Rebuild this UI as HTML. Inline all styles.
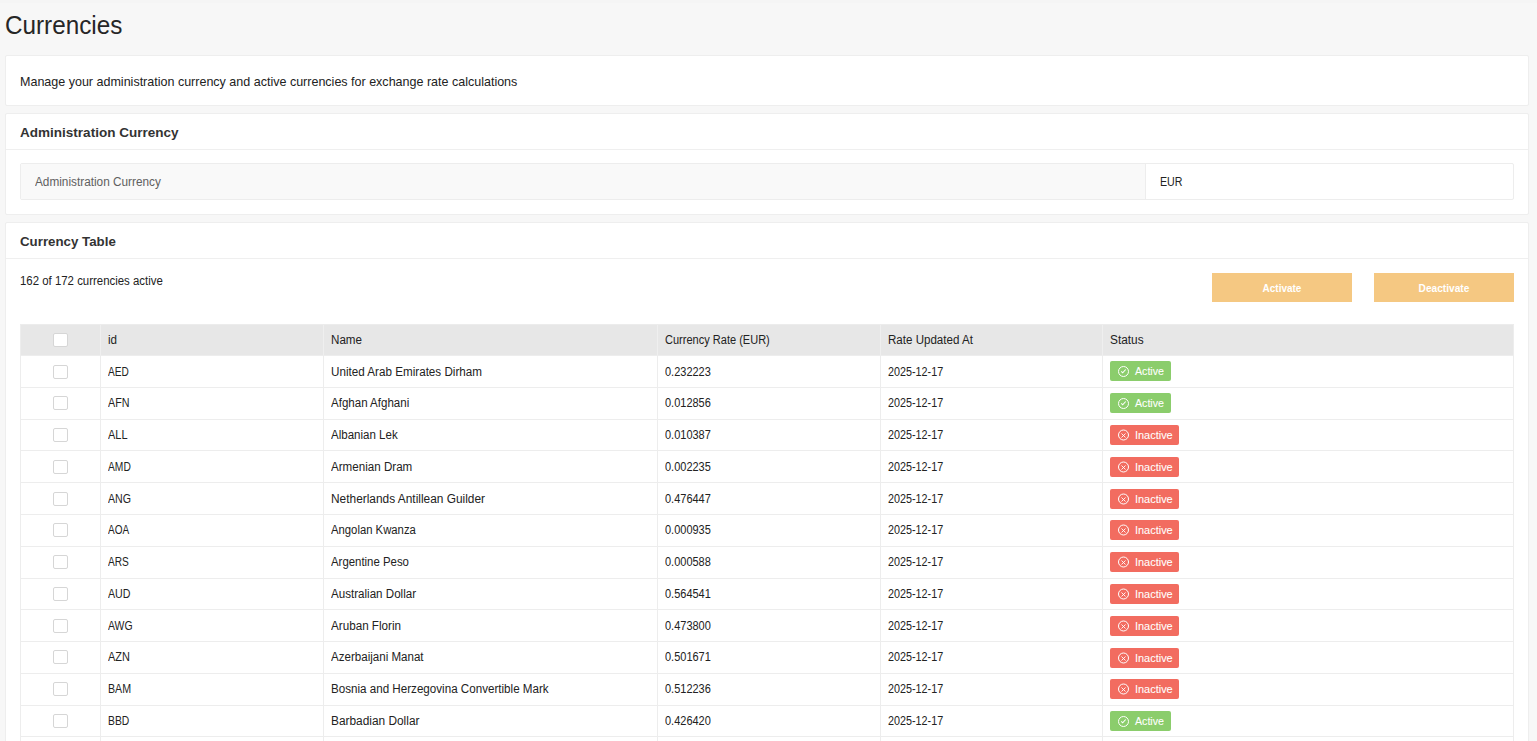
<!DOCTYPE html>
<html><head><meta charset="utf-8"><title>Currencies</title>
<style>
html,body{margin:0;padding:0}
body{background:#f7f7f7;font-family:"Liberation Sans",sans-serif;color:#222;width:1537px;height:741px;overflow:hidden;position:relative}
.t{position:absolute;white-space:nowrap;line-height:20px;font-size:12.5px}
.title{font-size:25px;color:#262626}
.desc{font-size:13px;color:#222}
.hdr{font-size:13.5px;font-weight:700;color:#333}
.lbl{color:#606060}
.cell{color:#222}
.btnt{font-size:11px;font-weight:700;color:#fff}
.bt{font-size:11px;color:#fff;-webkit-text-stroke:0.08px #fff}
.panel{position:absolute;left:5px;width:1522px;background:#fff;border:1px solid #eeeeee;border-radius:2px}
.topstrip{position:absolute;left:0;top:0;width:1537px;height:3px;background:#f5f5f5}
.hl{position:absolute;height:1px;background:#efefef}
.tl{left:20px;width:1494px;background:#ededed}
.vl{position:absolute;width:1px;background:#ededed}
.hv{background:#efefef}
.kv{position:absolute;left:20px;top:163px;width:1492px;height:35px;border:1px solid #ededed;background:#fff;border-radius:2px;overflow:hidden}
.kvk{position:absolute;left:0;top:0;width:1124px;height:35px;background:#f9f9f9;border-right:1px solid #ededed}
.btn{position:absolute;top:273px;width:140px;height:29px;background:#f5c882}
.thbg{position:absolute;left:20px;top:324px;width:1494px;height:31px;background:#e7e7e7}
.cb{position:absolute;left:53px;width:15px;height:14px;box-sizing:border-box;border:1px solid #d6d6d6;border-radius:2px;background:#fff}
.badge{position:absolute;left:1110px;height:20px;border-radius:2px}
.badge svg{position:absolute;left:7px;top:4px}
.green{background:#8bcd6c}
.red{background:#f26c60}
</style></head><body>
<div class="topstrip"></div>
<div class="t title" style="left:4.6px;top:15px;transform:scaleX(0.9706);transform-origin:0 50%">Currencies</div>
<div class="panel" style="top:55px;height:49px"></div>
<div class="panel" style="top:113px;height:100px"></div>
<div class="panel" style="top:222px;height:530px"></div>
<div class="hl" style="top:149px;left:6px;width:1522px"></div>
<div class="hl" style="top:258px;left:6px;width:1522px"></div>
<div class="t desc" style="left:20px;top:72px;transform:scaleX(0.9626);transform-origin:0 50%">Manage your administration currency and active currencies for exchange rate calculations</div>
<div class="t hdr" style="left:20px;top:123px;transform:scaleX(1.0019);transform-origin:0 50%">Administration Currency</div>
<div class="kv"><div class="kvk"></div></div>
<div class="t lbl" style="left:35px;top:172px;transform:scaleX(0.9433);transform-origin:0 50%">Administration Currency</div>
<div class="t cell" style="left:1160px;top:172px;transform:scaleX(0.8520);transform-origin:0 50%">EUR</div>
<div class="t hdr" style="left:20px;top:232px;transform:scaleX(0.9845);transform-origin:0 50%">Currency Table</div>
<div class="t cell" style="left:20px;top:271px;transform:scaleX(0.9135);transform-origin:0 50%">162 of 172 currencies active</div>
<div class="btn" style="left:1212px"></div><div class="btn" style="left:1374px"></div>
<div class="t btnt" style="width:140px;text-align:center;left:1212px;top:278px;transform:scaleX(0.9070);transform-origin:50% 50%">Activate</div>
<div class="t btnt" style="width:140px;text-align:center;left:1374px;top:278px;transform:scaleX(0.9218);transform-origin:50% 50%">Deactivate</div>
<div class="thbg"></div>
<div class="vl hv" style="left:100px;top:324px;height:31px"></div>
<div class="vl hv" style="left:323px;top:324px;height:31px"></div>
<div class="vl hv" style="left:657px;top:324px;height:31px"></div>
<div class="vl hv" style="left:880px;top:324px;height:31px"></div>
<div class="vl hv" style="left:1102px;top:324px;height:31px"></div>
<div class="vl" style="left:20px;top:324px;height:31px"></div>
<div class="vl" style="left:1513px;top:324px;height:31px"></div>
<div class="hl tl" style="top:324px;background:#ececec"></div>
<div class="hl tl" style="top:355px"></div>
<div class="hl tl" style="top:387px"></div>
<div class="hl tl" style="top:419px"></div>
<div class="hl tl" style="top:450px"></div>
<div class="hl tl" style="top:482px"></div>
<div class="hl tl" style="top:514px"></div>
<div class="hl tl" style="top:546px"></div>
<div class="hl tl" style="top:578px"></div>
<div class="hl tl" style="top:609px"></div>
<div class="hl tl" style="top:641px"></div>
<div class="hl tl" style="top:673px"></div>
<div class="hl tl" style="top:705px"></div>
<div class="hl tl" style="top:736px"></div>
<div class="vl" style="left:20px;top:355px;height:386px"></div>
<div class="vl" style="left:100px;top:355px;height:386px"></div>
<div class="vl" style="left:323px;top:355px;height:386px"></div>
<div class="vl" style="left:657px;top:355px;height:386px"></div>
<div class="vl" style="left:880px;top:355px;height:386px"></div>
<div class="vl" style="left:1102px;top:355px;height:386px"></div>
<div class="vl" style="left:1513px;top:355px;height:386px"></div>
<div class="cb" style="top:333px"></div>
<div class="t cell" style="left:108px;top:330px;transform:scaleX(0.9283);transform-origin:0 50%">id</div>
<div class="t cell" style="left:331px;top:330px;transform:scaleX(0.9283);transform-origin:0 50%">Name</div>
<div class="t cell" style="left:665px;top:330px;transform:scaleX(0.8822);transform-origin:0 50%">Currency Rate (EUR)</div>
<div class="t cell" style="left:888px;top:330px;transform:scaleX(0.9253);transform-origin:0 50%">Rate Updated At</div>
<div class="t cell" style="left:1110px;top:330px;transform:scaleX(0.9471);transform-origin:0 50%">Status</div>
<div class="cb" style="top:365px"></div>
<div class="t cell" style="left:108px;top:362px;transform:scaleX(0.8077);transform-origin:0 50%">AED</div>
<div class="t cell" style="left:331px;top:362px;transform:scaleX(0.9329);transform-origin:0 50%">United Arab Emirates Dirham</div>
<div class="t cell" style="left:665px;top:362px;transform:scaleX(0.8788);transform-origin:0 50%">0.232223</div>
<div class="t cell" style="left:888px;top:362px;transform:scaleX(0.8625);transform-origin:0 50%">2025-12-17</div>
<div class="badge green" style="top:361px;width:61px"><svg width="13" height="13" viewBox="0 0 13 13"><circle cx="6.5" cy="6.5" r="5" fill="none" stroke="#fff" stroke-width="1"/><path d="M4.3 6.4 L5.7 7.8 L8.7 4.5" fill="none" stroke="#fff" stroke-width="1.1"/></svg></div>
<div class="t bt" style="left:1135px;top:361px;transform:scaleX(0.9667);transform-origin:0 50%">Active</div>
<div class="cb" style="top:396px"></div>
<div class="t cell" style="left:108px;top:393px;transform:scaleX(0.8583);transform-origin:0 50%">AFN</div>
<div class="t cell" style="left:331px;top:393px;transform:scaleX(0.9226);transform-origin:0 50%">Afghan Afghani</div>
<div class="t cell" style="left:665px;top:393px;transform:scaleX(0.8788);transform-origin:0 50%">0.012856</div>
<div class="t cell" style="left:888px;top:393px;transform:scaleX(0.8625);transform-origin:0 50%">2025-12-17</div>
<div class="badge green" style="top:393px;width:61px"><svg width="13" height="13" viewBox="0 0 13 13"><circle cx="6.5" cy="6.5" r="5" fill="none" stroke="#fff" stroke-width="1"/><path d="M4.3 6.4 L5.7 7.8 L8.7 4.5" fill="none" stroke="#fff" stroke-width="1.1"/></svg></div>
<div class="t bt" style="left:1135px;top:393px;transform:scaleX(0.9667);transform-origin:0 50%">Active</div>
<div class="cb" style="top:428px"></div>
<div class="t cell" style="left:108px;top:425px;transform:scaleX(0.8773);transform-origin:0 50%">ALL</div>
<div class="t cell" style="left:331px;top:425px;transform:scaleX(0.9222);transform-origin:0 50%">Albanian Lek</div>
<div class="t cell" style="left:665px;top:425px;transform:scaleX(0.8788);transform-origin:0 50%">0.010387</div>
<div class="t cell" style="left:888px;top:425px;transform:scaleX(0.8625);transform-origin:0 50%">2025-12-17</div>
<div class="badge red" style="top:425px;width:69px"><svg width="13" height="13" viewBox="0 0 13 13"><circle cx="6.5" cy="6.0" r="5" fill="none" stroke="#fff" stroke-width="1"/><path d="M4.5 4.5 L8.5 8.5 M8.5 4.5 L4.5 8.5" fill="none" stroke="#fff" stroke-width="0.9"/></svg></div>
<div class="t bt" style="left:1135px;top:425px;transform:scaleX(0.9946);transform-origin:0 50%">Inactive</div>
<div class="cb" style="top:460px"></div>
<div class="t cell" style="left:108px;top:457px;transform:scaleX(0.8214);transform-origin:0 50%">AMD</div>
<div class="t cell" style="left:331px;top:457px;transform:scaleX(0.9287);transform-origin:0 50%">Armenian Dram</div>
<div class="t cell" style="left:665px;top:457px;transform:scaleX(0.8788);transform-origin:0 50%">0.002235</div>
<div class="t cell" style="left:888px;top:457px;transform:scaleX(0.8625);transform-origin:0 50%">2025-12-17</div>
<div class="badge red" style="top:457px;width:69px"><svg width="13" height="13" viewBox="0 0 13 13"><circle cx="6.5" cy="6.0" r="5" fill="none" stroke="#fff" stroke-width="1"/><path d="M4.5 4.5 L8.5 8.5 M8.5 4.5 L4.5 8.5" fill="none" stroke="#fff" stroke-width="0.9"/></svg></div>
<div class="t bt" style="left:1135px;top:457px;transform:scaleX(0.9946);transform-origin:0 50%">Inactive</div>
<div class="cb" style="top:492px"></div>
<div class="t cell" style="left:108px;top:489px;transform:scaleX(0.8500);transform-origin:0 50%">ANG</div>
<div class="t cell" style="left:331px;top:489px;transform:scaleX(0.9516);transform-origin:0 50%">Netherlands Antillean Guilder</div>
<div class="t cell" style="left:665px;top:489px;transform:scaleX(0.8788);transform-origin:0 50%">0.476447</div>
<div class="t cell" style="left:888px;top:489px;transform:scaleX(0.8625);transform-origin:0 50%">2025-12-17</div>
<div class="badge red" style="top:489px;width:69px"><svg width="13" height="13" viewBox="0 0 13 13"><circle cx="6.5" cy="6.0" r="5" fill="none" stroke="#fff" stroke-width="1"/><path d="M4.5 4.5 L8.5 8.5 M8.5 4.5 L4.5 8.5" fill="none" stroke="#fff" stroke-width="0.9"/></svg></div>
<div class="t bt" style="left:1135px;top:489px;transform:scaleX(0.9946);transform-origin:0 50%">Inactive</div>
<div class="cb" style="top:523px"></div>
<div class="t cell" style="left:108px;top:520px;transform:scaleX(0.8000);transform-origin:0 50%">AOA</div>
<div class="t cell" style="left:331px;top:520px;transform:scaleX(0.9043);transform-origin:0 50%">Angolan Kwanza</div>
<div class="t cell" style="left:665px;top:520px;transform:scaleX(0.8788);transform-origin:0 50%">0.000935</div>
<div class="t cell" style="left:888px;top:520px;transform:scaleX(0.8625);transform-origin:0 50%">2025-12-17</div>
<div class="badge red" style="top:520px;width:69px"><svg width="13" height="13" viewBox="0 0 13 13"><circle cx="6.5" cy="6.0" r="5" fill="none" stroke="#fff" stroke-width="1"/><path d="M4.5 4.5 L8.5 8.5 M8.5 4.5 L4.5 8.5" fill="none" stroke="#fff" stroke-width="0.9"/></svg></div>
<div class="t bt" style="left:1135px;top:520px;transform:scaleX(0.9946);transform-origin:0 50%">Inactive</div>
<div class="cb" style="top:555px"></div>
<div class="t cell" style="left:108px;top:552px;transform:scaleX(0.8120);transform-origin:0 50%">ARS</div>
<div class="t cell" style="left:331px;top:552px;transform:scaleX(0.9118);transform-origin:0 50%">Argentine Peso</div>
<div class="t cell" style="left:665px;top:552px;transform:scaleX(0.8788);transform-origin:0 50%">0.000588</div>
<div class="t cell" style="left:888px;top:552px;transform:scaleX(0.8625);transform-origin:0 50%">2025-12-17</div>
<div class="badge red" style="top:552px;width:69px"><svg width="13" height="13" viewBox="0 0 13 13"><circle cx="6.5" cy="6.0" r="5" fill="none" stroke="#fff" stroke-width="1"/><path d="M4.5 4.5 L8.5 8.5 M8.5 4.5 L4.5 8.5" fill="none" stroke="#fff" stroke-width="0.9"/></svg></div>
<div class="t bt" style="left:1135px;top:552px;transform:scaleX(0.9946);transform-origin:0 50%">Inactive</div>
<div class="cb" style="top:587px"></div>
<div class="t cell" style="left:108px;top:584px;transform:scaleX(0.8538);transform-origin:0 50%">AUD</div>
<div class="t cell" style="left:331px;top:584px;transform:scaleX(0.9272);transform-origin:0 50%">Australian Dollar</div>
<div class="t cell" style="left:665px;top:584px;transform:scaleX(0.8788);transform-origin:0 50%">0.564541</div>
<div class="t cell" style="left:888px;top:584px;transform:scaleX(0.8625);transform-origin:0 50%">2025-12-17</div>
<div class="badge red" style="top:584px;width:69px"><svg width="13" height="13" viewBox="0 0 13 13"><circle cx="6.5" cy="6.0" r="5" fill="none" stroke="#fff" stroke-width="1"/><path d="M4.5 4.5 L8.5 8.5 M8.5 4.5 L4.5 8.5" fill="none" stroke="#fff" stroke-width="0.9"/></svg></div>
<div class="t bt" style="left:1135px;top:584px;transform:scaleX(0.9946);transform-origin:0 50%">Inactive</div>
<div class="cb" style="top:619px"></div>
<div class="t cell" style="left:108px;top:616px;transform:scaleX(0.8345);transform-origin:0 50%">AWG</div>
<div class="t cell" style="left:331px;top:616px;transform:scaleX(0.9333);transform-origin:0 50%">Aruban Florin</div>
<div class="t cell" style="left:665px;top:616px;transform:scaleX(0.8788);transform-origin:0 50%">0.473800</div>
<div class="t cell" style="left:888px;top:616px;transform:scaleX(0.8625);transform-origin:0 50%">2025-12-17</div>
<div class="badge red" style="top:616px;width:69px"><svg width="13" height="13" viewBox="0 0 13 13"><circle cx="6.5" cy="6.0" r="5" fill="none" stroke="#fff" stroke-width="1"/><path d="M4.5 4.5 L8.5 8.5 M8.5 4.5 L4.5 8.5" fill="none" stroke="#fff" stroke-width="0.9"/></svg></div>
<div class="t bt" style="left:1135px;top:616px;transform:scaleX(0.9946);transform-origin:0 50%">Inactive</div>
<div class="cb" style="top:650px"></div>
<div class="t cell" style="left:108px;top:647px;transform:scaleX(0.8750);transform-origin:0 50%">AZN</div>
<div class="t cell" style="left:331px;top:647px;transform:scaleX(0.9250);transform-origin:0 50%">Azerbaijani Manat</div>
<div class="t cell" style="left:665px;top:647px;transform:scaleX(0.8788);transform-origin:0 50%">0.501671</div>
<div class="t cell" style="left:888px;top:647px;transform:scaleX(0.8625);transform-origin:0 50%">2025-12-17</div>
<div class="badge red" style="top:648px;width:69px"><svg width="13" height="13" viewBox="0 0 13 13"><circle cx="6.5" cy="6.0" r="5" fill="none" stroke="#fff" stroke-width="1"/><path d="M4.5 4.5 L8.5 8.5 M8.5 4.5 L4.5 8.5" fill="none" stroke="#fff" stroke-width="0.9"/></svg></div>
<div class="t bt" style="left:1135px;top:648px;transform:scaleX(0.9946);transform-origin:0 50%">Inactive</div>
<div class="cb" style="top:682px"></div>
<div class="t cell" style="left:108px;top:679px;transform:scaleX(0.8538);transform-origin:0 50%">BAM</div>
<div class="t cell" style="left:331px;top:679px;transform:scaleX(0.9296);transform-origin:0 50%">Bosnia and Herzegovina Convertible Mark</div>
<div class="t cell" style="left:665px;top:679px;transform:scaleX(0.8788);transform-origin:0 50%">0.512236</div>
<div class="t cell" style="left:888px;top:679px;transform:scaleX(0.8625);transform-origin:0 50%">2025-12-17</div>
<div class="badge red" style="top:679px;width:69px"><svg width="13" height="13" viewBox="0 0 13 13"><circle cx="6.5" cy="6.0" r="5" fill="none" stroke="#fff" stroke-width="1"/><path d="M4.5 4.5 L8.5 8.5 M8.5 4.5 L4.5 8.5" fill="none" stroke="#fff" stroke-width="0.9"/></svg></div>
<div class="t bt" style="left:1135px;top:679px;transform:scaleX(0.9946);transform-origin:0 50%">Inactive</div>
<div class="cb" style="top:714px"></div>
<div class="t cell" style="left:108px;top:711px;transform:scaleX(0.8280);transform-origin:0 50%">BBD</div>
<div class="t cell" style="left:331px;top:711px;transform:scaleX(0.9500);transform-origin:0 50%">Barbadian Dollar</div>
<div class="t cell" style="left:665px;top:711px;transform:scaleX(0.8788);transform-origin:0 50%">0.426420</div>
<div class="t cell" style="left:888px;top:711px;transform:scaleX(0.8625);transform-origin:0 50%">2025-12-17</div>
<div class="badge green" style="top:711px;width:61px"><svg width="13" height="13" viewBox="0 0 13 13"><circle cx="6.5" cy="6.5" r="5" fill="none" stroke="#fff" stroke-width="1"/><path d="M4.3 6.4 L5.7 7.8 L8.7 4.5" fill="none" stroke="#fff" stroke-width="1.1"/></svg></div>
<div class="t bt" style="left:1135px;top:711px;transform:scaleX(0.9667);transform-origin:0 50%">Active</div>
</body></html>
